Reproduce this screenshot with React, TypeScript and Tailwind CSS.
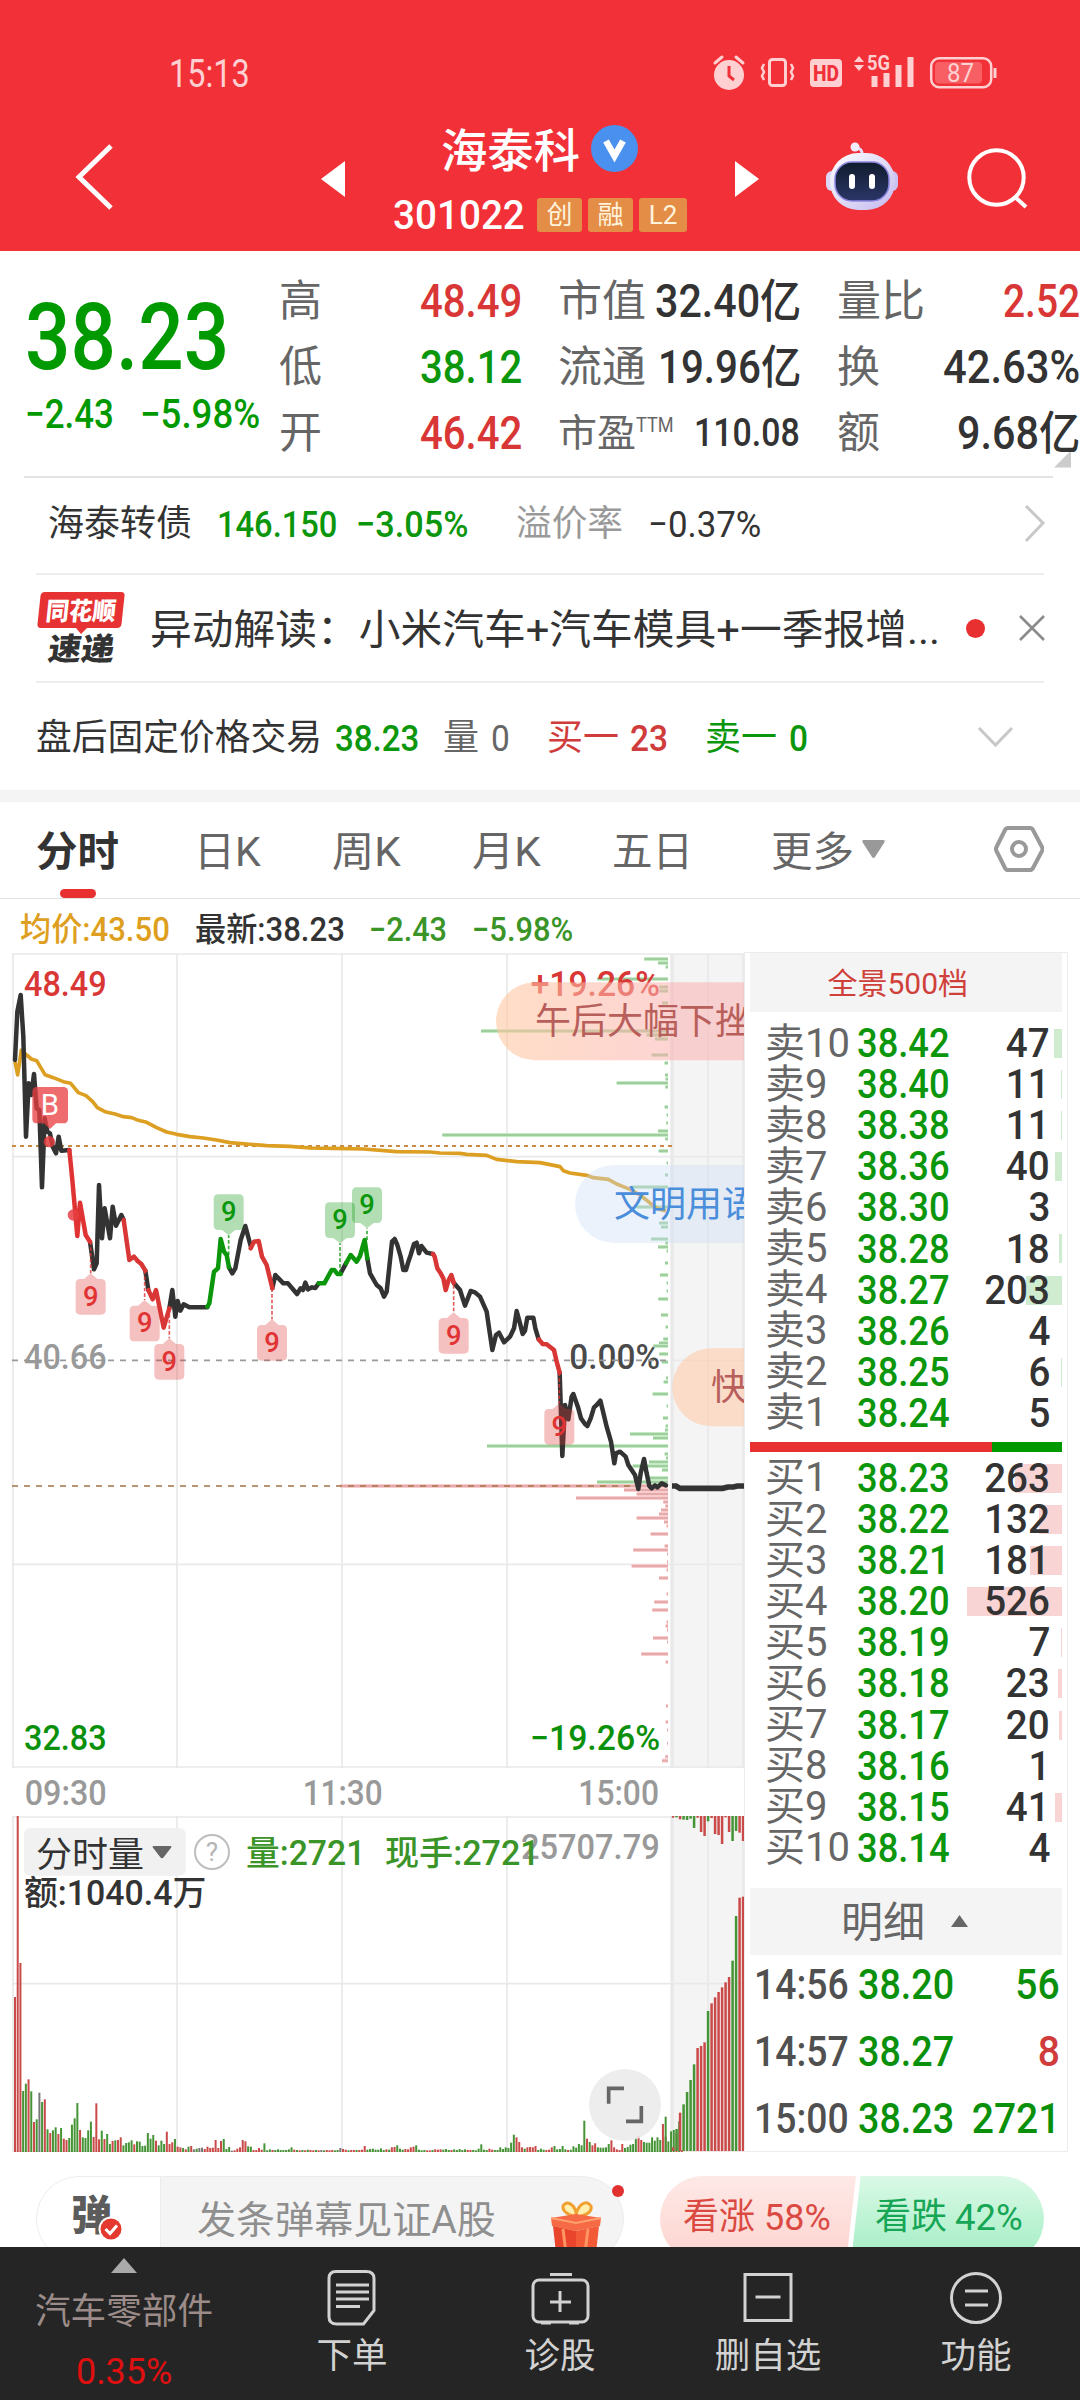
import { useLayoutEffect, useRef, useState, type ReactNode } from 'react';

/* Text condensed horizontally so that it fills the width given by its class. */
function T({ className, children }: { className: string; children: ReactNode }) {
  const outer = useRef<HTMLSpanElement>(null);
  const inner = useRef<HTMLSpanElement>(null);
  const [scale, setScale] = useState(1);
  useLayoutEffect(() => {
    if (outer.current && inner.current && inner.current.offsetWidth > 0) {
      setScale(outer.current.clientWidth / inner.current.offsetWidth);
    }
  }, []);
  return (
    <span ref={outer} className={'flex shrink-0 leading-none ' + className}>
      <span ref={inner} className="inline-block origin-left whitespace-nowrap" style={{ transform: `scaleX(${scale})` }}>
        {children}
      </span>
    </span>
  );
}

function StatusIcons() {
  return (
    <svg className="ml-[461px] h-[40px] w-[290px]" viewBox="711 53 290 40" fill="none" stroke="#ffd0d2">
      <circle cx="729" cy="75" r="15" fill="#ffd0d2" stroke="none" />
      <path d="M715 63l7-6M743 63l-7-6" strokeWidth="3" strokeLinecap="round" />
      <path d="M729 66v10l5 4" stroke="#f03038" strokeWidth="3" />
      <rect x="769.500" y="59.500" width="16" height="26" rx="3" strokeWidth="3" />
      <path d="M764 64l-2 4 2 4-2 4 2 4M791 64l2 4-2 4 2 4-2 4" strokeWidth="2.500" />
      <rect x="810" y="59" width="32" height="28" rx="4" fill="#ffd0d2" stroke="none" />
      <text x="813" y="81" textLength="26" lengthAdjust="spacingAndGlyphs" fontSize="22" fontWeight="800" fill="#f03038" stroke="none">HD</text>
      <path d="M854 62l5-6 5 6zM854 65l5 6 5-6z" fill="#ffd0d2" stroke="none" />
      <text x="867" y="70" textLength="23" lengthAdjust="spacingAndGlyphs" fontSize="20" fontWeight="700" fill="#ffd0d2" stroke="none">5G</text>
      <path d="M874.500 76v11M886.500 73v14M898.500 65v22M910.500 57v30" strokeWidth="6" />
      <rect x="931.200" y="58.200" width="60" height="29" rx="8" strokeWidth="2.500" />
      <rect x="935" y="62" width="47" height="21.500" rx="4" fill="#f75f64" stroke="none" />
      <path d="M995 68v10" strokeWidth="3" />
      <text x="947" y="81.500" textLength="27" lengthAdjust="spacingAndGlyphs" fontSize="25" fill="#ffd0d2" stroke="none">87</text>
    </svg>
  );
}

function Robot() {
  return (
    <svg className="ml-[66px] mt-[32px] h-[72px] w-[74px]" viewBox="824 142 74 72">
      <defs>
        <linearGradient id="shell" x1="0" y1="0" x2="1" y2="1">
          <stop offset="0" stopColor="#fff" />
          <stop offset="1" stopColor="#c3b9ee" />
        </linearGradient>
        <linearGradient id="face" x1="0" y1="0" x2="0" y2="1">
          <stop offset="0" stopColor="#101c2c" />
          <stop offset="1" stopColor="#2b3668" />
        </linearGradient>
      </defs>
      <path d="M853 148q9-1 8 8" fill="none" stroke="#e8dcf6" strokeWidth="3" />
      <circle cx="854" cy="147" r="4.500" fill="#f3ecfb" />
      <rect x="825" y="171" width="12" height="20" rx="6" fill="#dcd6f8" />
      <rect x="885" y="171" width="12" height="20" rx="6" fill="#c9c2f3" />
      <rect x="829" y="153" width="65" height="57" rx="28" fill="url(#shell)" />
      <rect x="834" y="162" width="54" height="39" rx="17" fill="url(#face)" stroke="#8d86e0" strokeWidth="1.500" />
      <rect x="848" y="174" width="6" height="15" rx="3" fill="#fff" />
      <rect x="868" y="174" width="6" height="15" rx="3" fill="#fff" />
    </svg>
  );
}

function Header() {
  return (
    <header className="h-[251px] bg-[#f23038] text-white">
      <div className="flex h-[110px] items-start pt-[53px]">
        <T className="ml-[169px] mt-[2px] w-[81px] text-[38px] text-[#ffd0d2]">15:13</T>
        <StatusIcons />
      </div>
      <div className="flex items-start">
        <svg className="ml-[74px] mt-[33px] h-[68px] w-[40px]" viewBox="0 0 40 68" fill="none" stroke="#fff" strokeWidth="5">
          <path d="M37 3L5 34l32 31" />
        </svg>
        <svg className="ml-[207px] mt-[51px] h-[36px] w-[24px]" viewBox="0 0 24 36" fill="#fff"><path d="M24 0v36L0 18z" /></svg>
        <div className="ml-[48px] mt-[12px] flex w-[294px] flex-col">
          <div className="flex h-[52px] items-center pl-[48px]">
            <T className="mt-[5px] w-[139px] text-[46px] font-medium">海泰科</T>
            <svg className="ml-[11px] h-[47px] w-[47px]" viewBox="0 0 47 47">
              <circle cx="23.500" cy="23.500" r="23.500" fill="#4a90ee" />
              <path d="M15 16l8.500 15L32 16" fill="none" stroke="#fff" strokeWidth="6.500" />
            </svg>
          </div>
          <div className="mt-[24px] flex h-[34px] items-center">
            <T className="mt-[1px] w-[132px] text-[41px] font-medium">301022</T>
            <div className="ml-[12px] flex gap-[6px] text-[26px] leading-none text-[#fff3dc]">
              <span className="flex h-[34px] w-[45px] items-center justify-center rounded-[3px] bg-[#e38d47]">创</span>
              <span className="flex h-[34px] w-[45px] items-center justify-center rounded-[3px] bg-[#e38d47]">融</span>
              <span className="flex h-[34px] w-[48px] items-center justify-center rounded-[3px] bg-[#e38d47]">L2</span>
            </div>
          </div>
        </div>
        <svg className="ml-[48px] mt-[51px] h-[36px] w-[24px]" viewBox="0 0 24 36" fill="#fff"><path d="M0 0v36l24-18z" /></svg>
        <Robot />
        <svg className="ml-[67px] mt-[37px] h-[64px] w-[64px]" viewBox="964 148 64 64" fill="none" stroke="#fff" strokeWidth="4">
          <circle cx="994.500" cy="178.500" r="27.200" />
          <path d="M1013 198l11 10" />
        </svg>
      </div>
    </header>
  );
}

function Quote() {
  return (
    <section className="flex h-[225px] items-start">
      <div className="w-[279px] pl-[25px] text-[#009900]">
        <T className="mt-[40px] w-[204px] text-[93px] font-medium">38.23</T>
        <div className="mt-[11px] flex">
          <T className="w-[89px] text-[40px] font-medium">−2.43</T>
          <T className="ml-[26px] w-[120px] text-[40px] font-medium">−5.98%</T>
        </div>
      </div>
      <div className="flex w-[243px] flex-col pt-[17px] text-[46px]">
        <div className="flex h-[66px] items-center justify-between"><T className="w-[43px] text-[43px] text-[#666]">高</T><T className="w-[102px] font-medium text-[#d93636]">48.49</T></div>
        <div className="flex h-[66px] items-center justify-between"><T className="w-[43px] text-[43px] text-[#666]">低</T><T className="w-[102px] font-medium text-[#0b960b]">38.12</T></div>
        <div className="flex h-[66px] items-center justify-between"><T className="w-[43px] text-[43px] text-[#666]">开</T><T className="w-[102px] font-medium text-[#d93636]">46.42</T></div>
      </div>
      <div className="ml-[36px] flex w-[243px] flex-col pt-[17px] text-[46px] text-[#333]">
        <div className="flex h-[66px] items-center justify-between"><T className="w-[88px] text-[43px] text-[#666]">市值</T><T className="w-[146px] font-medium">32.40亿</T></div>
        <div className="flex h-[66px] items-center justify-between"><T className="w-[88px] text-[43px] text-[#666]">流通</T><T className="w-[143px] font-medium">19.96亿</T></div>
        <div className="flex h-[66px] items-center">
          <T className="w-[78px] text-[38px] text-[#666]">市盈</T>
          <T className="-mt-[15px] w-[38px] text-[21px] text-[#666]">TTM</T>
          <T className="ml-[20px] w-[106px] text-[39px] font-medium">110.08</T>
        </div>
      </div>
      <div className="ml-[36px] flex w-[243px] shrink-0 flex-col pt-[17px] text-[46px] text-[#333]">
        <div className="flex h-[66px] items-center justify-between"><T className="w-[88px] text-[43px] text-[#666]">量比</T><T className="w-[77px] font-medium text-[#d93636]">2.52</T></div>
        <div className="flex h-[66px] items-center justify-between"><T className="w-[43px] text-[43px] text-[#666]">换</T><T className="w-[137px] font-medium">42.63%</T></div>
        <div className="flex h-[66px] items-center justify-between"><T className="w-[43px] text-[43px] text-[#666]">额</T><T className="w-[123px] font-medium">9.68亿</T></div>
        <svg className="-mt-[16px] ml-[217px] h-[18px] w-[17px]" viewBox="0 0 17 17" fill="#ccc"><path d="M17 0v17H0z" /></svg>
      </div>
    </section>
  );
}

function InfoRows() {
  return (
    <section>
      <div className="ml-[24px] h-[2px] w-[1029px] bg-[#e3e3e3]" />
      <div className="flex h-[95px] items-center pb-[3px] pl-[48px]">
        <T className="w-[144px] text-[36px] text-[#333]">海泰转债</T>
        <T className="ml-[25px] w-[120px] text-[37px] font-medium text-[#0b960b]">146.150</T>
        <T className="ml-[19px] w-[112px] text-[37px] font-medium text-[#0b960b]">−3.05%</T>
        <T className="ml-[48px] w-[107px] text-[36px] text-[#999]">溢价率</T>
        <T className="ml-[25px] w-[113px] text-[37px] text-[#333]">−0.37%</T>
        <svg className="ml-[263px] h-[40px] w-[22px]" viewBox="0 0 22 40" fill="none" stroke="#c8c8c8" strokeWidth="3"><path d="M2 2l17 17L2 37" /></svg>
      </div>
      <div className="ml-[36px] h-[2px] w-[1008px] bg-[#eee]" />
      <div className="flex h-[106px] items-center pl-[36px]">
        <svg className="h-[74px] w-[90px]" viewBox="36 591 90 74">
          <path d="M45 592h76q4 0 3.500 4l-3 28q-.500 4-4.500 4H87l-6 6-5-6H41q-4 0-3.500-4l3-28q.500-4 4.500-4z" fill="#e63232" />
          <text transform="translate(45 620) skewX(-6)" textLength="70" lengthAdjust="spacingAndGlyphs" fontSize="25" fontWeight="900" fill="#fff">同花顺</text>
          <text transform="translate(47 660) skewX(-8)" textLength="66" lengthAdjust="spacingAndGlyphs" fontSize="31" fontWeight="900" fill="#333">速递</text>
        </svg>
        <T className="ml-[24px] mt-[4px] w-[790px] text-[41px] text-[#333]">异动解读：小米汽车+汽车模具+一季报增...</T>
        <div className="ml-[26px] h-[19px] w-[19px] rounded-full bg-[#e93030]" />
        <svg className="ml-[34px] h-[26px] w-[26px]" viewBox="0 0 26 26" stroke="#8a8a8a" strokeWidth="2.600"><path d="M1 1l24 24M25 1L1 25" /></svg>
      </div>
      <div className="ml-[36px] h-[2px] w-[1008px] bg-[#eee]" />
      <div className="flex h-[107px] items-center pl-[36px]">
        <T className="mt-[3px] w-[286px] text-[36px] text-[#333]">盘后固定价格交易</T>
        <T className="ml-[13px] mt-[3px] w-[84px] text-[37px] font-medium text-[#0b960b]">38.23</T>
        <T className="ml-[24px] mt-[3px] w-[36px] text-[36px] text-[#666]">量</T>
        <T className="ml-[12px] mt-[3px] w-[19px] text-[37px] text-[#666]">0</T>
        <T className="ml-[37px] mt-[3px] w-[72px] text-[36px] text-[#d03c3c]">买一</T>
        <T className="ml-[11px] mt-[3px] w-[38px] text-[37px] font-medium text-[#d03c3c]">23</T>
        <T className="ml-[37px] mt-[3px] w-[72px] text-[36px] text-[#0b960b]">卖一</T>
        <T className="ml-[12px] mt-[3px] w-[19px] text-[37px] font-medium text-[#0b960b]">0</T>
        <svg className="ml-[169px] h-[22px] w-[37px]" viewBox="0 0 37 22" fill="none" stroke="#c8c8c8" strokeWidth="3"><path d="M2 2l16.500 17L35 2" /></svg>
      </div>
      <div className="h-[12px] bg-[#f4f4f4]" />
    </section>
  );
}

function Tabs() {
  return (
    <nav className="flex h-[97px] items-start border-b border-[#e3e3e3] pl-[36px] text-[41px] text-[#666]">
      <div className="flex flex-col items-center">
        <T className="mt-[30px] w-[83px] text-[41px] font-bold text-[#333]">分时</T>
        <div className="mt-[16px] h-[9px] w-[36px] rounded-[5px] bg-[#e93030]" />
      </div>
      <T className="ml-[75px] mt-[30px] w-[67px]">日K</T>
      <T className="ml-[71px] mt-[30px] w-[69px]">周K</T>
      <T className="ml-[71px] mt-[30px] w-[69px]">月K</T>
      <T className="ml-[71px] mt-[30px] w-[81px]">五日</T>
      <T className="ml-[78px] mt-[30px] w-[83px]">更多</T>
      <svg className="ml-[8px] mt-[38px] h-[19px] w-[23px]" viewBox="0 0 23 19" fill="#999"><path d="M2 0h19q3 0 1 3l-9 14q-1.500 2-3 0L1 3Q-1 0 2 0z" /></svg>
      <svg className="ml-[109px] mt-[22px] h-[50px] w-[50px]" viewBox="0 0 50 50" fill="none" stroke="#999" strokeWidth="4">
        <path d="M14 4h22q2 0 3 2l9 17q1 2 0 4l-9 17q-1 2-3 2H14q-2 0-3-2L2.500 27q-1-2 0-4L11 6q1-2 3-2z" />
        <circle cx="25" cy="25" r="7" />
      </svg>
    </nav>
  );
}

/* Chart geometry is in thirds of a pixel, measured from the top of the price pane. */
const GRAY_LINE = '#e9e9e9';

const priceSegments: [string, string][] = [
  ['#333', '45,360 52,215 62,165 70,290 78,590 86,430 94,465 102,402 110,505 118,510 126,742 134,535 142,575 150,580 158,620 168,640 176,590 184,632 208,630'],
  ['#333', '270,905 282,988 290,970 297,735 306,895 314,805 330,895 338,800 348,857 364,825 371,840'],
  ['#333', '436,992 445,1050'],
  ['#333', '508,1105 517,1050 526,1130 533,1083 541,1112 551,1093 568,1102 622,1102'],
  ['#333', '687,982 697,1000 706,985 722,900 736,858 752,918'],
  ['#333', '817,1045 826,1005 850,1030 864,1030 891,1062 902,1045 909,1050 916,1028 924,1048 936,1042 946,1044 956,1030'],
  ['#333', '1022,1000 1038,970'],
  ['#333', '1102,955 1110,1000 1130,1035 1142,1045 1152,1070 1160,1055 1176,905 1184,897 1192,915 1202,950 1210,990 1218,990 1225,965 1232,945 1242,912 1250,908 1257,940 1264,918 1280,938 1299,942'],
  ['#333', '1361,1028 1380,1050 1395,1097 1412,1053 1425,1057 1440,1070 1460,1115 1468,1170 1477,1230 1488,1185 1497,1178 1512,1207 1530,1190 1542,1165 1550,1113 1560,1150 1568,1182 1575,1172 1582,1133 1600,1133 1606,1165 1616,1198'],
  ['#333', '1679,1298 1687,1548 1695,1395 1705,1438 1715,1370 1720,1362 1735,1405 1743,1435 1755,1452 1762,1458 1772,1435 1782,1402 1790,1395 1801,1382 1808,1410 1820,1460 1833,1505 1843,1570 1848,1540 1860,1535 1877,1550 1885,1575 1905,1605 1915,1647 1922,1600 1932,1557 1940,1600 1948,1638 1955,1645 1965,1636 1972,1642 1985,1630 1998,1636'],
  ['#e03434', '208,630 217,720 232,888 240,788 257,885 270,905'],
  ['#d93636', '371,840 388,960 402,950 412,962 424,972 436,992'],
  ['#d93636', '445,1050 458,1078 468,1050 491,1163 508,1105'],
  ['#d93636', '752,925 762,905 776,903 786,950 800,975 817,1045'],
  ['#d93636', '1299,942 1304,950 1312,985 1322,1000 1330,1015 1337,1050 1346,1020 1354,1005 1361,1028'],
  ['#d93636', '1616,1198 1628,1212 1640,1213 1662,1230 1670,1265 1679,1298'],
  ['#0b960b', '622,1100 628,1090 642,995 654,985 662,897 672,935 680,945 687,982'],
  ['#0b960b', '956,1030 973,1030 995,990 1003,990 1012,1002 1022,1002'],
  ['#0b960b', '1038,970 1052,945 1070,965 1080,948 1094,900 1102,955'],
];

const averageLine =
  '45,365 53,405 64,330 80,345 94,357 110,362 135,404 160,413 190,425 212,430 235,458 258,467 278,485 292,503 315,515 345,522 370,530 395,533 415,541 440,547 470,563 500,576 530,583 570,590 610,594 650,600 690,608 740,612 800,617 870,619 930,624 1000,625 1090,627 1190,635 1290,636 1320,639 1380,640 1400,643 1460,646 1490,658 1550,665 1620,668 1680,680 1690,692 1710,699 1760,706 1780,713 1825,718 1850,732 1890,748 1920,765 1960,797 1975,807 1998,813';

const asks: [number, number][] = [
  [57, 71], [69, 30], [81, 7], [117, 212], [141, 26], [153, 26], [189, 18], [273, 561], [285, 64], [297, 39], [345, 49], [369, 10], [405, 9], [417, 7], [429, 154], [441, 8], [501, 10], [525, 4], [549, 5], [573, 30], [585, 677], [597, 8], [633, 28], [669, 4], [705, 9], [741, 107], [801, 94], [849, 27], [861, 21], [897, 51], [909, 8], [921, 30], [933, 4], [969, 9], [1005, 24], [1029, 4], [1053, 4], [1077, 29], [1125, 21], [1161, 7], [1197, 14], [1209, 27], [1218, 44], [1242, 26], [1266, 19], [1314, 6], [1326, 13], [1362, 46], [1398, 4], [1434, 15], [1458, 7], [1470, 9], [1482, 114], [1494, 45], [1518, 543], [1542, 10], [1554, 6], [1566, 57], [1578, 106], [1590, 18], [1614, 64], [1626, 213],
];

const bids: [number, number][] = [
  [1638, 984], [1650, 132], [1662, 94], [1674, 276], [1686, 14], [1698, 8], [1710, 21], [1722, 27], [1734, 94], [1746, 12], [1758, 4], [1782, 52], [1818, 10], [1830, 104], [1842, 3], [1866, 3], [1878, 109], [1890, 4], [1914, 27], [1962, 4], [1986, 41], [2010, 47], [2046, 4], [2058, 7], [2070, 3], [2094, 45], [2106, 3], [2142, 80], [2166, 7], [2298, 6], [2346, 7], [2370, 3], [2410, 3], [2450, 8], [2462, 18],
];

const signals: { x: number; tip: number; from: number; up: boolean }[] = [
  { x: 272, tip: 1000, from: 905, up: false },
  { x: 434, tip: 1080, from: 992, up: false },
  { x: 508, tip: 1195, from: 1105, up: false },
  { x: 816, tip: 1138, from: 1045, up: false },
  { x: 1361, tip: 1117, from: 1035, up: false },
  { x: 1678, tip: 1390, from: 1298, up: false },
  { x: 686, tip: 886, from: 945, up: true },
  { x: 1020, tip: 910, from: 1000, up: true },
  { x: 1101, tip: 865, from: 900, up: true },
];

const minuteVolumes = (
  'r465 r1008 r567 g183 g205 r218 g182 r90 g98 k178 g150 r158 g68 r57 g65 g74 r54 g72 r40 r36 g42 g82 g101 g147 r66 g44 g42 g65 g91 r45 r146 r38 g64 r39 g54 g24 r33 g35 r36 r44 ' +
  'g20 g27 g29 g35 r23 g32 g31 g18 g19 g57 g40 g51 r34 g20 g34 g24 r61 r24 r29 g39 r16 r14 g12 r8 g16 r18 k8 g10 k12 k13 r9 r16 r12 r13 r36 r12 r33 g39 g9 g15 ' +
  'k4 r5 r10 r14 r36 r32 g17 g16 r6 r6 r12 r7 g26 g5 g8 r6 g6 g8 g6 g6 g6 g8 g14 r7 g6 r5 g6 r5 g7 r6 r5 g6 r5 k6 g5 r6 r5 r6 g5 g6 ' +
  'k12 r9 r7 g5 r6 r6 g6 r6 r7 r18 g7 g9 g10 g7 g7 g11 g6 r8 g7 r14 r15 g20 g10 g7 r9 r8 r14 r16 g20 g7 g5 g6 r5 r5 g6 r8 r7 r8 g7 g9 ' +
  'g6 r6 g8 g6 g9 g6 g8 r6 r6 g6 g5 g10 g23 g7 g6 r10 r7 g6 g6 g14 g9 g14 g12 g28 g52 r44 r30 r14 g10 r14 r15 r14 r18 g6 g10 g7 r6 r7 r14 g18 ' +
  'g8 g9 g18 g8 r6 g7 g17 g13 g24 g20 g94 r40 g30 r20 r26 g14 g13 g13 g14 g24 r35 r14 r8 r6 r24 g12 g15 g22 g24 g44 r48 r36 g30 g28 g28 g44 g34 g44 g36 r84 ' +
  'r46 g32 g62 g66 r56 g92 r5'
)
  .split(' ')
  .map((v) => ({ tone: v[0], size: Number(v.slice(1)) }));

const lateVolumes = 'r11 g66 r115 g140 g177 g213 g260 r309 r315 r326 g420 r443 r461 r477 r491 r506 r522 g571 g705 r760 r763'.split(' ');
const lateImbalance = 'r5 g4 r10 g11 g12 g8 g36 r5 r48 r60 g16 r6 r54 r57 r84 r4 r48 g75 g45 r50 r75'.split(' ');

function toneColor(tone: string) {
  return tone === 'r' ? '#c94a48' : tone === 'g' ? '#459436' : '#777';
}

function Signal({ x, tip, from, up }: { x: number; tip: number; from: number; up: boolean }) {
  const top = up ? tip - 123 : tip + 17;
  const fill = up ? '#0b960b' : '#e03434';
  const body = up
    ? `M${x - 31} ${top}h62q14 0 14 14v79q0 14-14 14h-11l-20 16-20-16h-11q-14 0-14-14v-79q0-14 14-14z`
    : `M${x - 31} ${top}h11l20-17 20 17h11q14 0 14 14v79q0 14-14 14h-62q-14 0-14-14v-79q0-14 14-14z`;
  return (
    <g>
      <path d={`M${x} ${from}V${tip}`} stroke={fill} strokeWidth="5" strokeDasharray="11 6" opacity=".8" />
      <path d={body} fill={fill} opacity=".31" />
      <text x={x} y={top + 80} textAnchor="middle" fontSize="82" fontWeight="500" fill={fill}>9</text>
    </g>
  );
}

function Bubble({ x, y, textX, fill, color, children }: { x: number; y: number; textX: number; fill: string; color: string; children: string }) {
  return (
    <g>
      <rect x={x} y={y} width="1000" height="234" rx="117" fill={fill} />
      <text x={textX} y={y + 156} fontSize="108" fill={color}>{children}</text>
    </g>
  );
}

function Label({ x, y, w, fill, weight = 500, size = 104, children }: { x: number; y: number; w: number; fill: string; weight?: number; size?: number; children: string }) {
  return (
    <text x={x} y={y} textLength={w} lengthAdjust="spacingAndGlyphs" fontSize={size} fontWeight={weight} fill={fill}>{children}</text>
  );
}

function Chart() {
  return (
    <svg className="block h-[1201px] w-[744px] shrink-0" viewBox="0 33 2232 3603" fill="none">
      <defs>
        <linearGradient id="warm" x1="0" x2="1">
          <stop offset="0" stopColor="#ffc8a0" stopOpacity=".6" />
          <stop offset=".55" stopColor="#fbb0b0" stopOpacity=".55" />
          <stop offset="1" stopColor="#fbaeb0" stopOpacity=".5" />
        </linearGradient>
      </defs>

      {/* After-hours pane */}
      <rect x="2013" y="42" width="219" height="2442" fill="#f4f4f4" />
      <rect x="2013" y="2628" width="219" height="1008" fill="#f4f4f4" />

      {/* Grid */}
      <path d="M39 42V2484M531 42V2484M1026 42V2484M1521 42V2484M2124 42V2484M2229 42V2484M36 42H2232M36 650H2232M36 1873H2232M36 2481H2232M2016 1261H2232" stroke={GRAY_LINE} strokeWidth="5" />
      <path d="M39 2628V3636M531 2628V3636M1026 2628V3636M1521 2628V3636M2124 2628V3636M2229 2628V3636M36 2631H2232M36 3131H2232" stroke={GRAY_LINE} strokeWidth="5" />
      <path d="M2016 42V2484M2016 2628V3636" stroke={GRAY_LINE} strokeWidth="10" />
      <path d="M36 3634H2232" stroke="#f0e4e4" strokeWidth="4" />

      {/* Order depth */}
      {asks.map(([y, w]) => (
        <g key={y}>
          <rect x={2004 - w} y={y - 6} width={w} height="12" fill="#c3ecc3" />
          <rect x={2004 - w} y={y - 3} width={w} height="6" fill="#a0cca0" />
        </g>
      ))}
      {bids.map(([y, w]) => (
        <g key={y}>
          <rect x={2004 - w} y={y - 6} width={w} height="12" fill="#fbcccc" />
          <rect x={2004 - w} y={y - 3} width={w} height="6" fill="#e3abab" />
        </g>
      ))}

      <Label x={72} y={168} w={248} fill="#d93636">48.49</Label>
      <Label x={1592} y={168} w={388} fill="#d93636">+19.26%</Label>
      <Label x={72} y={1286} w={248} fill="#999">40.66</Label>
      <Label x={1708} y={1286} w={272} fill="#4a4a4a">0.00%</Label>
      <Label x={72} y={2430} w={248} fill="#0b900b">32.83</Label>
      <Label x={1590} y={2430} w={390} fill="#0b900b">−19.26%</Label>
      <Label x={74} y={2594} w={246} fill="#999">09:30</Label>
      <Label x={908} y={2594} w={240} fill="#999">11:30</Label>
      <Label x={1735} y={2594} w={242} fill="#999">15:00</Label>

      {/* Reference levels */}
      <path d="M36 618H2016" stroke="#c98a45" strokeWidth="6" strokeDasharray="12 12" />
      <path d="M36 1261H2000" stroke="#999" strokeWidth="5" strokeDasharray="18 18" />
      <path d="M36 1638H1915" stroke="#a87a50" strokeWidth="6" strokeDasharray="18 18" opacity=".8" />

      <polyline points={averageLine} stroke="#dc9f22" strokeWidth="11" strokeLinejoin="round" />
      {priceSegments.map(([color, points]) => (
        <polyline key={points} points={points} stroke={color} strokeWidth="13.500" strokeLinejoin="round" strokeLinecap="round" />
      ))}
      <path d="M2016 1638H2028L2040 1645H2168L2184 1641H2200L2212 1638H2232" stroke="#333" strokeWidth="17" />

      {/* Buy marks */}
      <circle cx="148" cy="605" r="17" fill="#e03a3c" opacity=".85" />
      <circle cx="220" cy="825" r="17" fill="#e84044" opacity=".85" />
      <path d="M111 441h79q14 0 14 14v81q0 14-14 14h-22l-18 17-18-17h-21q-14 0-14-14v-81q0-14 14-14z" fill="#e93c40" opacity=".76" />
      <text x="150" y="526" textAnchor="middle" fontSize="88" fill="#fff">B</text>

      {signals.map((s) => <Signal key={s.x} {...s} />)}

      <Bubble x={1488} y={127} textX={1605} fill="url(#warm)" color="#b85f5b">午后大幅下挫</Bubble>
      <Bubble x={1725} y={675} textX={1842} fill="rgba(205,222,246,.4)" color="#4a8ddb">文明用语</Bubble>
      <Bubble x={2017} y={1225} textX={2133} fill="rgba(255,200,165,.55)" color="#b85f5b">快</Bubble>

      {/* Volume */}
      {minuteVolumes.map((v, i) => (
        <rect key={i} x={42 + i * 8.133} y={3636 - v.size} width="6" height={v.size} fill={toneColor(v.tone)} />
      ))}
      <rect x="1994" y="3530" width="6" height="106" fill="#459436" />
      {lateVolumes.map((v, i) => {
        const h = Number(v.slice(1));
        return <rect key={i} x={2015.500 + i * 10.5} y={3633 - h} width="7.500" height={h} fill={toneColor(v[0])} />;
      })}
      {lateImbalance.map((v, i) => (
        <rect key={i} x={2015.500 + i * 10.5} y="2628" width="7.500" height={Number(v.slice(1))} fill={toneColor(v[0])} />
      ))}

      <rect x="72" y="2664" width="485" height="143" rx="18" fill="#f1f1f1" />
      <Label x={108} y={2781} w={324} weight={400} size={106} fill="#333">分时量</Label>
      <path d="M461 2718h50q6 0 2 5l-22 29q-5 6-10 0l-22-29q-4-5 2-5z" fill="#666" />
      <circle cx="636" cy="2736" r="51" stroke="#bdbdbd" strokeWidth="6" />
      <text x="636" y="2762" textAnchor="middle" fontSize="78" fill="#b5b5b5">?</text>
      <Label x={1563} y={2757} w={416} fill="#999">25707.79</Label>
      <Label x={738} y={2775} w={358} fill="#3a9428">量:2721</Label>
      <Label x={1155} y={2775} w={464} fill="#3a9428">现手:2721</Label>
      <Label x={72} y={2895} w={547} fill="#333">额:1040.4万</Label>

      <circle cx="1875" cy="3495" r="108" fill="#ebebeb" opacity=".9" />
      <path d="M1826 3491v-46h46M1878 3544h46v-46" stroke="#666" strokeWidth="11" />
    </svg>
  );
}

const sells: [string, number][] = [['38.42', 47], ['38.40', 11], ['38.38', 11], ['38.36', 40], ['38.30', 3], ['38.28', 18], ['38.27', 203], ['38.26', 4], ['38.25', 6], ['38.24', 5]];
const buys: [string, number][] = [['38.23', 263], ['38.22', 132], ['38.21', 181], ['38.20', 526], ['38.19', 7], ['38.18', 23], ['38.17', 20], ['38.16', 1], ['38.15', 41], ['38.14', 4]];

function BookRow({ label, price, qty, barClass }: { label: string; price: string; qty: number; barClass: string }) {
  return (
    <div className="relative flex h-[41.1px] shrink-0 items-center pl-[15px] text-[41px] leading-none">
      <div className={'absolute right-0 top-[6px] h-[29px] ' + barClass} style={{ width: Math.floor(qty * 0.181) }} />
      <span className="relative w-[92px] whitespace-nowrap text-[40px] text-[#666]">{label}</span>
      <T className="relative w-[93px] font-medium text-[#0b960b]">{price}</T>
      <span className="relative ml-auto mr-[12px] origin-right scale-x-[.94] font-medium text-[#333]">{qty}</span>
    </div>
  );
}

function OrderBook() {
  return (
    <aside className="mt-[1px] flex h-[1200px] w-[324px] flex-col border border-[#ececec] pl-[5px] pr-[5px]">
      <div className="flex h-[59px] shrink-0 items-center justify-center bg-[#f4f4f4]">
        <T className="-ml-[16px] mt-[2px] w-[141px] text-[30px] text-[#d0403a]">全景500档</T>
      </div>
      <div className="mt-[11px] flex shrink-0 flex-col">
        {sells.map(([p, q], i) => <BookRow key={p} label={'卖' + (10 - i)} price={p} qty={q} barClass="bg-[#cfebd0]" />)}
      </div>
      <div className="mt-[8px] flex h-[10px] shrink-0">
        <div className="w-[242px] bg-[#e83030]" />
        <div className="flex-1 bg-[#009900]" />
      </div>
      <div className="mt-[6px] flex shrink-0 flex-col">
        {buys.map(([p, q], i) => <BookRow key={p} label={'买' + (i + 1)} price={p} qty={q} barClass="bg-[#f9d4d5]" />)}
      </div>
      <div className="mt-[19px] flex h-[67px] shrink-0 items-center bg-[#f4f4f4] pl-[91px]">
        <T className="mt-[4px] w-[84px] text-[42px] text-[#666]">明细</T>
        <svg className="ml-[26px] h-[12px] w-[17px]" viewBox="0 0 17 12" fill="#666"><path d="M8.500 0L17 12H0z" /></svg>
      </div>
      {([['14:56', '38.20', 56, 'text-[#0b900b]'], ['14:57', '38.27', 8, 'text-[#d03c3c]'], ['15:00', '38.23', 2721, 'text-[#0b900b]']] as const).map(([t, p, q, c]) => (
        <div key={t} className="flex h-[67px] shrink-0 items-start pl-[4px] pt-[9px] text-[42px] font-medium leading-none">
          <T className="w-[95px] text-[#505050]">{t}</T>
          <T className="ml-[9px] w-[96px] text-[#0b900b]">{p}</T>
          <span className={'ml-auto mr-[2px] origin-right scale-x-[.93] ' + c}>{q}</span>
        </div>
      ))}
    </aside>
  );
}

function Comments() {
  return (
    <div className="flex h-[95px] shrink-0 items-start overflow-hidden pl-[36px] pt-[24px]">
      <div className="relative flex h-[86px] w-[588px] overflow-visible">
        <div className="flex w-[125px] items-start rounded-l-full border border-[#ececec] bg-white pl-[34px] pt-[17px]">
          <svg className="h-[54px] w-[52px]" viewBox="0 0 52 54">
            <text x="0" y="36" fontSize="41" fontWeight="900" fill="#5c5c5c">弹</text>
            <circle cx="40" cy="35" r="12.500" fill="#fff" />
            <circle cx="40" cy="35" r="10.500" fill="#e5392f" />
            <path d="M34.500 35l4.500 4.500 7-8" fill="none" stroke="#fff" strokeWidth="3" />
          </svg>
        </div>
        <div className="flex flex-1 items-start rounded-r-full border border-l-0 border-[#ececec] bg-[#f4f4f4] pl-[36px] pt-[24px]">
          <T className="w-[299px] text-[38px] text-[#8f8f8f]">发条弹幕见证A股</T>
          <svg className="ml-[53px] h-[52px] w-[54px]" viewBox="549 2199 54 52">
            <path d="M576 2215q-14-4-13-11 4-6 10 0 4 5 3 11q0-7 5-12 6-5 10 1 2 8-14 11z" fill="#fff0b0" stroke="#f0a030" strokeWidth="3" />
            <path d="M551 2216l25-4 25 4-1 8-24 5-24-5z" fill="#f66a45" />
            <path d="M553 2224l23 5v22h-20z" fill="#e8452c" />
            <path d="M599 2224l-23 5v22h20z" fill="#f25a38" />
            <path d="M551 2216l25 5 25-5" fill="none" stroke="#ffa070" strokeWidth="2" />
            <path d="M563 2227l3 24M588 2227l-3 24" stroke="#ff9560" strokeWidth="3" />
          </svg>
        </div>
        <div className="absolute right-0 top-[9px] h-[12px] w-[12px] rounded-full bg-[#e03030]" />
      </div>
      <div className="ml-[36px] flex h-[86px] w-[384px]">
        <div className="flex h-full w-[196px] items-start rounded-l-full bg-linear-to-b from-[#fee9e7] to-[#fdd3ce] pl-[23px] pt-[23px] text-[#db4a42] [clip-path:polygon(0_0,100%_0,95%_100%,0_100%)]">
          <T className="w-[72px] text-[36px]">看涨</T>
          <T className="ml-[9px] w-[67px] text-[37px]">58%</T>
        </div>
        <div className="-ml-[5px] flex h-full w-[193px] items-start rounded-r-full bg-linear-to-b from-[#daf9e7] to-[#a0edc2] pl-[24px] pt-[23px] text-[#17a556] [clip-path:polygon(5%_0,100%_0,100%_100%,0_100%)]">
          <T className="w-[72px] text-[36px]">看跌</T>
          <T className="ml-[8px] w-[68px] text-[37px]">42%</T>
        </div>
      </div>
    </div>
  );
}

function BarItem({ icon, children }: { icon: ReactNode; children: ReactNode }) {
  return (
    <div className="flex w-[208px] flex-col items-center pt-[20px]">
      <svg className="h-[60px] w-[60px]" viewBox="0 0 60 60" fill="none" stroke="#d2d2d2" strokeWidth="3">{icon}</svg>
      <div className="mt-[12px] text-[35.500px] leading-none text-[#d2d2d2]">{children}</div>
    </div>
  );
}

function BottomBar() {
  return (
    <footer className="flex h-[153px] shrink-0 bg-[#252525]">
      <div className="flex w-[248px] flex-col items-center">
        <svg className="mt-[11px] h-[15px] w-[26px]" viewBox="0 0 26 15" fill="#aaa"><path d="M13 0l13 15H0z" /></svg>
        <T className="mt-[21px] w-[178px] text-[36px] text-[#9b8c89]">汽车零部件</T>
        <T className="mt-[23px] w-[96px] text-[37px] text-[#e01010]">0.35%</T>
      </div>
      <BarItem icon={<><path d="M14 4.500h30q8 0 8 7v32L41.500 57H15q-8 0-8-7V11.500q0-7 7-7z" /><path d="M14 18h33M14 25h33M14 32h33M14 39.500h24" /></>}>下单</BarItem>
      <BarItem icon={<><rect x="3" y="13" width="55" height="42" rx="6" /><path d="M20 7.500h22M30 24v21M20 35h21M11 56h10M39 56h10" /></>}>诊股</BarItem>
      <BarItem icon={<><rect x="7" y="7.500" width="46" height="46" /><path d="M17.500 30h25" /></>}>删自选</BarItem>
      <BarItem icon={<><circle cx="30" cy="31" r="24.500" /><path d="M19 24h23M19 38h23" /></>}>功能</BarItem>
    </footer>
  );
}

export default function App() {
  return (
    <div className="flex h-[2400px] w-[1080px] flex-col overflow-hidden bg-white font-[Roboto,'Noto_Sans_CJK_SC',sans-serif]">
      <Header />
      <Quote />
      <InfoRows />
      <Tabs />
      <div className="flex h-[52px] shrink-0 items-center pl-[20px] text-[33px] font-medium">
        <T className="mt-[8px] w-[150px] text-[#de9f20]">均价:43.50</T>
        <T className="ml-[25px] mt-[8px] w-[150px] text-[#333]">最新:38.23</T>
        <T className="ml-[24px] mt-[8px] w-[78px] text-[#3a9428]">−2.43</T>
        <T className="ml-[25px] mt-[8px] w-[101px] text-[#3a9428]">−5.98%</T>
      </div>
      <div className="flex h-[1201px] shrink-0">
        <Chart />
        <OrderBook />
      </div>
      <Comments />
      <BottomBar />
    </div>
  );
}
